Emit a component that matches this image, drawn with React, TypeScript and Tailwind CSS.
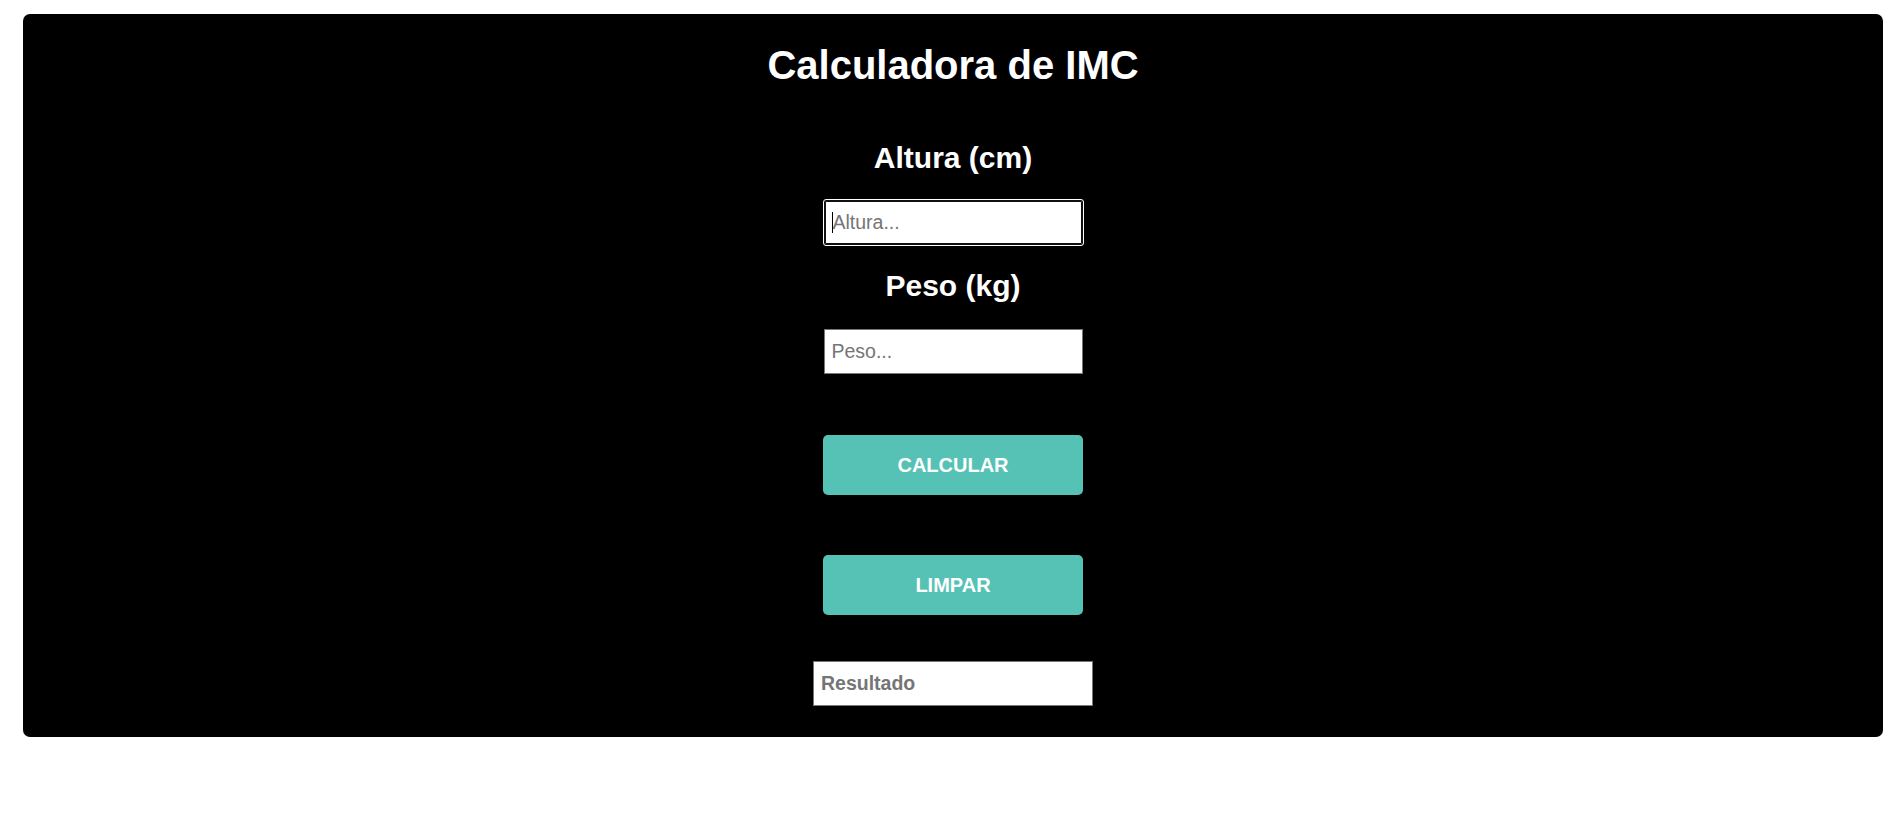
import React from "react";

export default function App() {
  return (
    <div className="min-h-[821px] w-full bg-white pt-[14px] font-['Liberation_Sans',Arial,sans-serif]">
      <div className="ml-[23px] flex w-[1860px] flex-col items-center rounded-[7px] bg-black pt-[28px] pb-[31px]">
        <h1 className="text-[40px] leading-[46px] font-bold text-white">Calculadora de IMC</h1>

        <h2 className="mt-[53px] text-[30px] leading-[34px] font-bold text-white">Altura (cm)</h2>
        <div className="relative mt-[25px] h-[45px] w-[259px]">
          <input
            type="text"
            placeholder="Altura..."
            className="h-[45px] w-[259px] rounded-[2px] border border-[#101010] bg-white px-[8px] text-[19.5px] text-black shadow-[inset_0_0_0_1px_#101010] outline outline-1 outline-white placeholder:text-[#757575]"
          />
          <span className="pointer-events-none absolute top-[12px] left-[8px] h-[21px] w-[1px] bg-black" />
        </div>

        <h2 className="mt-[24px] text-[30px] leading-[34px] font-bold text-white">Peso (kg)</h2>
        <input
          type="text"
          placeholder="Peso..."
          className="mt-[26px] h-[45px] w-[259px] border border-[#767676] bg-white px-[7px] text-[19.5px] text-black outline-none placeholder:text-[#757575]"
        />

        <button className="mt-[61px] h-[60px] w-[260px] rounded-[5px] bg-[#55c2b5] text-[20px] font-bold text-white">
          CALCULAR
        </button>

        <button className="mt-[60px] h-[60px] w-[260px] rounded-[5px] bg-[#55c2b5] text-[20px] font-bold text-white">
          LIMPAR
        </button>

        <input
          type="text"
          readOnly
          placeholder="Resultado"
          className="mt-[46px] h-[45px] w-[280px] border border-[#767676] bg-white px-[7px] text-[19.5px] font-bold text-black outline-none placeholder:text-[#757575]"
        />
      </div>
    </div>
  );
}
